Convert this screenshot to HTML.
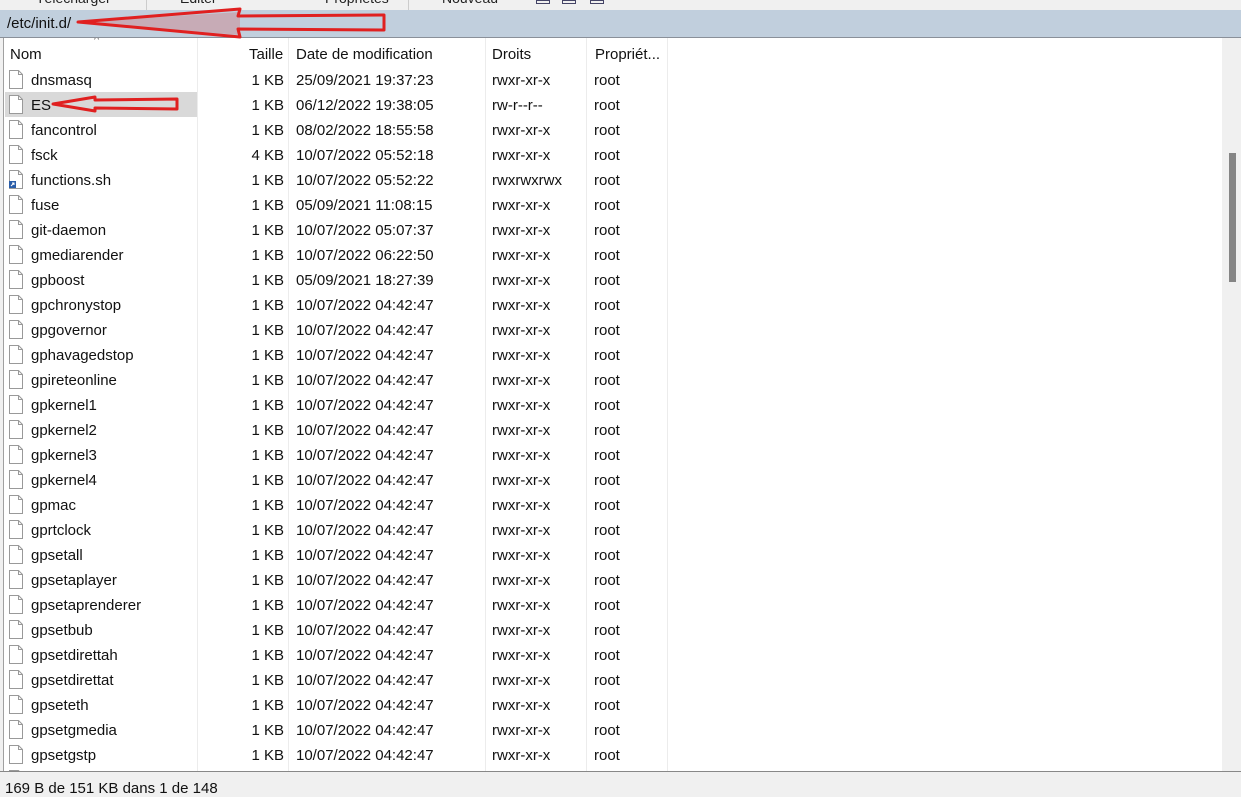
<!DOCTYPE html>
<html><head><meta charset="utf-8"><style>
*{margin:0;padding:0;box-sizing:border-box}
body{width:1241px;height:790px;overflow:hidden;background:#f0f0f0;font-family:"Liberation Sans",sans-serif;font-size:15px;color:#111;position:relative}
#tb{position:absolute;left:0;top:0;width:1241px;height:10px;background:#f0f0f0;overflow:hidden}
#tb span{position:absolute;top:-10px;font-size:14px;color:#222}
#path{position:absolute;left:0;top:10px;width:1241px;height:28px;background:#c1cfdd;border-bottom:1px solid #8a9099}
#path span{position:absolute;left:7px;top:5px;font-size:15px}
#list{position:absolute;left:3px;top:38px;width:1219px;height:733px;background:#fff;border-left:1px solid #a0a0a0;overflow:hidden}
.sep{position:absolute;top:0;width:1px;height:733px;background:#ececec}
.h{position:absolute;top:6px;font-size:15px}
.row{position:absolute;left:0;width:680px;height:25px}
.row div{position:absolute;top:5px;white-space:nowrap}
.ic{position:absolute;left:5px;top:3px;width:14px;height:19px}
#sb{position:absolute;left:1222px;top:39px;width:19px;height:732px;background:#f0f0f0}
#th{position:absolute;left:1229px;top:153px;width:7px;height:129px;background:#858585}
#status{position:absolute;left:0;top:771px;width:1241px;height:19px;background:#f0f0f0;border-top:1px solid #888}
#status span{position:absolute;left:5px;top:8px;font-size:15px}
</style></head><body>
<div id="tb">
<span style="left:36px">Télécharger</span><span style="left:180px">Editer</span><span style="left:325px">Propriétés</span><span style="left:442px">Nouveau</span>
<div style="position:absolute;left:146px;top:0;width:1px;height:10px;background:#ccc"></div>
<div style="position:absolute;left:408px;top:0;width:1px;height:10px;background:#ccc"></div>
<div style="position:absolute;left:536px;top:0;width:14px;height:4px;border:1px solid #446"></div>
<div style="position:absolute;left:562px;top:0;width:14px;height:4px;border:1px solid #446"></div>
<div style="position:absolute;left:590px;top:0;width:14px;height:4px;border:1px solid #446"></div>
</div>
<div id="path"><span>/etc/init.d/</span></div>
<div id="list">
<div class="sep" style="left:193px"></div><div class="sep" style="left:284px"></div><div class="sep" style="left:481px"></div><div class="sep" style="left:582px"></div><div class="sep" style="left:663px"></div>
<div class="h" style="left:6px;top:8px">Nom</div>
<div class="h" style="left:90px;top:-4px;font-size:11px;color:#666">^</div>
<div class="h" style="left:245px;top:8px">Taille</div>
<div class="h" style="left:292px;top:8px">Date de modification</div>
<div class="h" style="left:488px;top:8px">Droits</div>
<div class="h" style="left:591px;top:8px">Propriét...</div>
<div id="rows"></div>
</div>
<div id="sb"></div><div id="th"></div>
<div id="status"><span>169 B de 151 KB dans 1 de 148</span></div>
<svg style="position:absolute;left:0;top:0" width="400" height="120">
<path d="M78 22 L240 9 L238 16 L384 15 L384 30 L238 29 L240 37 Z" fill="none" stroke="#e02020" stroke-width="3" stroke-linejoin="round"/>
<path d="M78 22 L240 12 L240 35 Z" fill="#e02020" opacity="0.2"/>
<path d="M53 104 L95 97 L95 100 L177 99 L177 109 L95 108 L95 111 Z" fill="none" stroke="#e02020" stroke-width="3" stroke-linejoin="round"/>
</svg>
<script>
var d=[["dnsmasq","25/09/2021 19:37:23","rwxr-xr-x"],["ES","06/12/2022 19:38:05","rw-r--r--"],["fancontrol","08/02/2022 18:55:58","rwxr-xr-x"],["fsck","10/07/2022 05:52:18","rwxr-xr-x","4 KB"],["functions.sh","10/07/2022 05:52:22","rwxrwxrwx"],["fuse","05/09/2021 11:08:15","rwxr-xr-x"],["git-daemon","10/07/2022 05:07:37","rwxr-xr-x"],["gmediarender","10/07/2022 06:22:50","rwxr-xr-x"],["gpboost","05/09/2021 18:27:39","rwxr-xr-x"]];
var g=["gpchronystop","gpgovernor","gphavagedstop","gpireteonline","gpkernel1","gpkernel2","gpkernel3","gpkernel4","gpmac","gprtclock","gpsetall","gpsetaplayer","gpsetaprenderer","gpsetbub","gpsetdirettah","gpsetdirettat","gpseteth","gpsetgmedia","gpsetgstp","gpsetx"];
g.forEach(function(n){d.push([n,"10/07/2022 04:42:47","rwxr-xr-x"])});
var h="";
d.forEach(function(r,i){
var top=29+i*25;
h+='<div class="row" style="top:'+top+'px"><div style="position:absolute;top:0;height:25px;'+(i==1?'left:1px;width:192px;background:#d9d9d9':'')+'"></div>'+
'<svg class="ic" viewBox="0 0 14 19"><path d="M0.5 0.5H9.5L13.5 4.5V18.5H0.5Z" fill="#fff" stroke="#999"/><path d="M9.5 0.5V4.5H13.5" fill="none" stroke="#999"/>'+(i==4?'<rect x="0" y="11" width="7" height="7" fill="#2a5da8"/><path d="M2 16L5 13M3 13H5V15" stroke="#fff" fill="none"/>':'')+'</svg>'+
'<div style="left:27px">'+r[0]+'</div><div style="right:400px;text-align:right">'+(r[3]||"1 KB")+'</div><div style="left:292px">'+r[1]+'</div><div style="left:488px">'+r[2]+'</div><div style="left:590px">root</div></div>';
});
document.getElementById("rows").innerHTML=h;
</script>
</body></html>
